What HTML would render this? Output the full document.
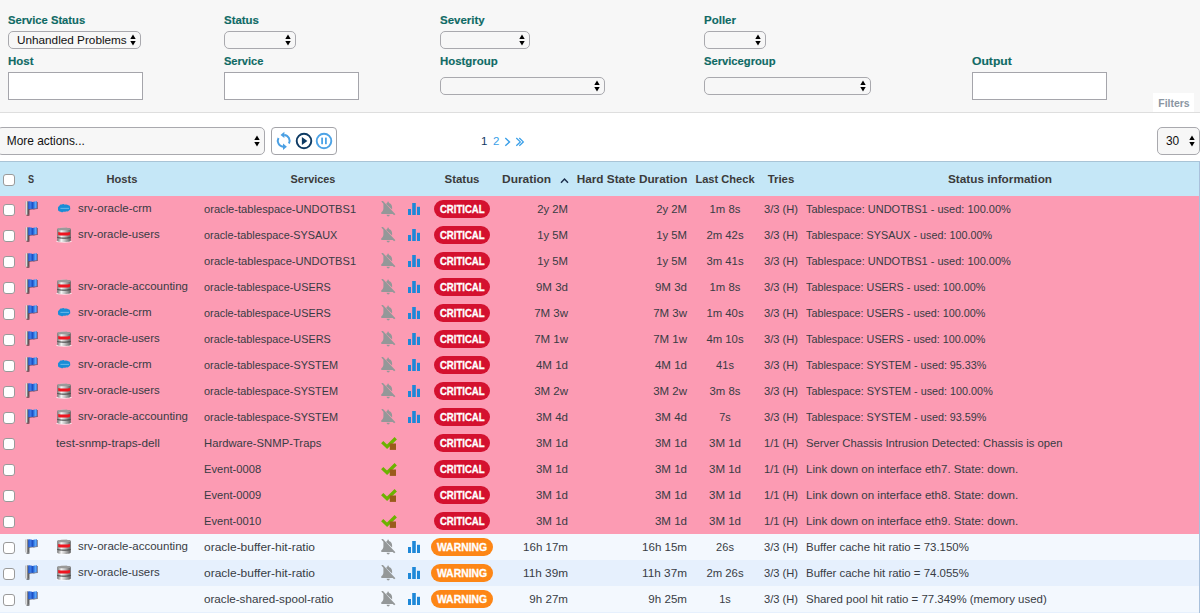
<!DOCTYPE html><html><head><meta charset="utf-8"><style>
html,body{margin:0;padding:0;background:#fff;}
body{width:1200px;height:613px;position:relative;overflow:hidden;font-family:"Liberation Sans", sans-serif;}
.t{position:absolute;white-space:nowrap;}
.sel{position:absolute;box-sizing:border-box;border:1px solid #a9a9ae;border-radius:5px;background:#f7f7f7;}
.st{position:absolute;top:0;white-space:nowrap;}
.arr{position:absolute;width:6px;height:12px;}
.up{position:absolute;left:0;top:0;width:0;height:0;border-left:2.7px solid transparent;border-right:2.7px solid transparent;border-bottom:4.4px solid #000;}
.dn{position:absolute;left:0;top:6.2px;width:0;height:0;border-left:2.7px solid transparent;border-right:2.7px solid transparent;border-top:4.4px solid #000;}
.inp{position:absolute;box-sizing:border-box;border:1px solid #a5a5ab;background:#fff;}
.cb{position:absolute;box-sizing:border-box;width:12px;height:12px;border:1px solid #9a9a9a;border-radius:3px;background:#fff;}
.ic{position:absolute;}
.badge{position:absolute;height:18px;border-radius:9px;color:#fff;font-weight:700;font-size:10.4px;line-height:18px;text-align:center;letter-spacing:0;-webkit-text-stroke:0.3px #fff;}
</style></head><body>
<svg width="0" height="0" style="position:absolute"><defs><linearGradient id="pg" x1="0" x2="1" y1="0" y2="0"><stop offset="0" stop-color="#a0a0a0"/><stop offset="0.28" stop-color="#f4f4f4"/><stop offset="0.55" stop-color="#a9a9a9"/><stop offset="1" stop-color="#3c3c3c"/></linearGradient><linearGradient id="fg" x1="0" x2="1" y1="0" y2="0"><stop offset="0" stop-color="#2457d0"/><stop offset="0.25" stop-color="#3a7ae8"/><stop offset="0.5" stop-color="#1d4fc2"/><stop offset="0.7" stop-color="#3a86ee"/><stop offset="0.88" stop-color="#66b0fa"/><stop offset="1" stop-color="#2c62c8"/></linearGradient><linearGradient id="dbg" x1="0" x2="1" y1="0" y2="0"><stop offset="0" stop-color="#707070"/><stop offset="0.3" stop-color="#f4f4f4"/><stop offset="0.55" stop-color="#c4c4c4"/><stop offset="0.8" stop-color="#8a8a8a"/><stop offset="1" stop-color="#5a5a5a"/></linearGradient></defs></svg>
<div style="position:absolute;left:0;top:0;width:1200px;height:112px;background:#f7f7f7;border-bottom:1px solid #dedede"></div>
<div class="t" style="left:8px;top:10.12px;font-size:11.2px;line-height:20px;font-weight:700;color:#0f6a65;-webkit-text-stroke:0.15px #0f6a65;">Service Status</div>
<div class="t" style="left:224px;top:10.12px;font-size:11.2px;line-height:20px;font-weight:700;color:#0f6a65;transform:scaleX(1.0219);transform-origin:left;-webkit-text-stroke:0.15px #0f6a65;">Status</div>
<div class="t" style="left:440px;top:10.12px;font-size:11.2px;line-height:20px;font-weight:700;color:#0f6a65;transform:scaleX(1.0266);transform-origin:left;-webkit-text-stroke:0.15px #0f6a65;">Severity</div>
<div class="t" style="left:704px;top:10.12px;font-size:11.2px;line-height:20px;font-weight:700;color:#0f6a65;transform:scaleX(1.0271);transform-origin:left;-webkit-text-stroke:0.15px #0f6a65;">Poller</div>
<div class="t" style="left:8px;top:51.12px;font-size:11.2px;line-height:20px;font-weight:700;color:#0f6a65;transform:scaleX(1.0245);transform-origin:left;-webkit-text-stroke:0.15px #0f6a65;">Host</div>
<div class="t" style="left:224px;top:51.12px;font-size:11.2px;line-height:20px;font-weight:700;color:#0f6a65;transform:scaleX(0.9878);transform-origin:left;-webkit-text-stroke:0.15px #0f6a65;">Service</div>
<div class="t" style="left:440px;top:51.12px;font-size:11.2px;line-height:20px;font-weight:700;color:#0f6a65;transform:scaleX(1.0199);transform-origin:left;-webkit-text-stroke:0.15px #0f6a65;">Hostgroup</div>
<div class="t" style="left:704px;top:51.12px;font-size:11.2px;line-height:20px;font-weight:700;color:#0f6a65;-webkit-text-stroke:0.15px #0f6a65;">Servicegroup</div>
<div class="t" style="left:972px;top:51.12px;font-size:11.2px;line-height:20px;font-weight:700;color:#0f6a65;transform:scaleX(1.0840);transform-origin:left;-webkit-text-stroke:0.15px #0f6a65;">Output</div>
<div class="sel" style="left:8px;top:31px;width:133px;height:18px;"><div class="st" style="left:8.0px;line-height:16px;font-size:11.75px;color:#111">Unhandled Problems</div><svg class="arr" style="right:3.9px;top:2.0px" width="6" height="12" viewBox="0 0 6 12"><path d="M0.3 5.0 L3 0.4 L5.7 5.0 Z M0.3 7.0 L3 11.6 L5.7 7.0 Z" fill="#000"/></svg></div>
<div class="sel" style="left:224px;top:31px;width:72px;height:18px;"><svg class="arr" style="right:3.9px;top:2.0px" width="6" height="12" viewBox="0 0 6 12"><path d="M0.3 5.0 L3 0.4 L5.7 5.0 Z M0.3 7.0 L3 11.6 L5.7 7.0 Z" fill="#000"/></svg></div>
<div class="sel" style="left:440px;top:31px;width:90px;height:18px;"><svg class="arr" style="right:3.9px;top:2.0px" width="6" height="12" viewBox="0 0 6 12"><path d="M0.3 5.0 L3 0.4 L5.7 5.0 Z M0.3 7.0 L3 11.6 L5.7 7.0 Z" fill="#000"/></svg></div>
<div class="sel" style="left:704px;top:31px;width:62px;height:18px;"><svg class="arr" style="right:3.9px;top:2.0px" width="6" height="12" viewBox="0 0 6 12"><path d="M0.3 5.0 L3 0.4 L5.7 5.0 Z M0.3 7.0 L3 11.6 L5.7 7.0 Z" fill="#000"/></svg></div>
<div class="sel" style="left:440px;top:77px;width:165px;height:18px;"><svg class="arr" style="right:3.9px;top:2.0px" width="6" height="12" viewBox="0 0 6 12"><path d="M0.3 5.0 L3 0.4 L5.7 5.0 Z M0.3 7.0 L3 11.6 L5.7 7.0 Z" fill="#000"/></svg></div>
<div class="sel" style="left:704px;top:77px;width:167px;height:18px;"><svg class="arr" style="right:3.9px;top:2.0px" width="6" height="12" viewBox="0 0 6 12"><path d="M0.3 5.0 L3 0.4 L5.7 5.0 Z M0.3 7.0 L3 11.6 L5.7 7.0 Z" fill="#000"/></svg></div>
<div class="inp" style="left:8px;top:72px;width:135px;height:28px;"></div>
<div class="inp" style="left:224px;top:72px;width:135px;height:28px;"></div>
<div class="inp" style="left:972px;top:72px;width:135px;height:28px;"></div>
<div style="position:absolute;left:1153px;top:93px;width:41px;height:19px;background:#fff"></div>
<div class="t" style="left:873.8px;width:600px;text-align:center;top:93.53px;font-size:10px;line-height:20px;font-weight:700;color:#8b96a2;transform:scaleX(1.0448);transform-origin:center;">Filters</div>
<div class="sel" style="left:-3px;top:127px;width:268px;height:28px;"><div class="st" style="left:8.8px;line-height:26px;font-size:11.9px;color:#111">More actions...</div><svg class="arr" style="right:3.9px;top:7.0px" width="6" height="12" viewBox="0 0 6 12"><path d="M0.3 5.0 L3 0.4 L5.7 5.0 Z M0.3 7.0 L3 11.6 L5.7 7.0 Z" fill="#000"/></svg></div>
<div style="position:absolute;left:271px;top:127px;width:64px;height:26px;border:1px solid #a3a3a8;border-radius:4px;background:#fff"></div>
<svg style="position:absolute;left:274px;top:130px" width="20" height="22" viewBox="0 0 20 22">
<path d="M10.2 4.9 A5.9 5.9 0 0 1 14.9 13.6" fill="none" stroke="#4a9fe3" stroke-width="2"/>
<path d="M10.4 1.7 L6.5 4.9 L10.4 8.1 Z" fill="#4a9fe3"/>
<path d="M9.2 16.7 A5.9 5.9 0 0 1 4.5 8.0" fill="none" stroke="#4a9fe3" stroke-width="2"/>
<path d="M9.0 13.5 L12.9 16.7 L9.0 19.9 Z" fill="#4a9fe3"/>
</svg>
<svg style="position:absolute;left:295px;top:132px" width="18" height="18" viewBox="0 0 18 18">
<circle cx="9" cy="9" r="7.3" fill="none" stroke="#0d3a63" stroke-width="1.9"/>
<path d="M6.9 4.9 L12.4 9 L6.9 13.1 Z" fill="#0d3a63"/></svg>
<svg style="position:absolute;left:315px;top:132px" width="18" height="18" viewBox="0 0 18 18">
<circle cx="9" cy="9" r="7.3" fill="none" stroke="#4da3e6" stroke-width="1.9"/>
<rect x="6.2" y="5.6" width="1.8" height="6.6" fill="#4da3e6"/><rect x="10" y="5.6" width="1.8" height="6.6" fill="#4da3e6"/></svg>
<div class="t" style="left:481px;top:131.12px;font-size:11.2px;line-height:20px;font-weight:400;color:#0d3a63;transform:scaleX(1.0276);transform-origin:left;">1</div>
<div class="t" style="left:492.5px;top:131.12px;font-size:11.2px;line-height:20px;font-weight:400;color:#3a9fe8;transform:scaleX(1.0276);transform-origin:left;">2</div>
<svg style="position:absolute;left:504px;top:137px" width="22" height="10" viewBox="0 0 22 10">
<path d="M1.3 1 L5.5 4.9 L1.3 8.8" fill="none" stroke="#3a9fe8" stroke-width="1.4"/>
<path d="M12.3 1 L16.3 4.9 L12.3 8.8 M15.3 1 L19.3 4.9 L15.3 8.8" fill="none" stroke="#3a9fe8" stroke-width="1.3"/></svg>
<div class="sel" style="left:1157px;top:127px;width:43px;height:28px;"><div class="st" style="left:8.0px;line-height:26px;font-size:11.9px;color:#111">30</div><svg class="arr" style="right:3.9px;top:7.0px" width="6" height="12" viewBox="0 0 6 12"><path d="M0.3 5.0 L3 0.4 L5.7 5.0 Z M0.3 7.0 L3 11.6 L5.7 7.0 Z" fill="#000"/></svg></div>
<div style="position:absolute;left:0;top:161px;width:1200px;height:35px;background:#c5e7f7;border-top:1px solid #a9c4d6;box-sizing:border-box"></div>
<div class="cb" style="left:3px;top:174px"></div>
<div class="t" style="left:-269px;width:600px;text-align:center;top:169.38px;font-size:11.6px;line-height:20px;font-weight:700;color:#3b3b3b;transform:scaleX(0.7838);transform-origin:center;">S</div>
<div class="t" style="left:-178px;width:600px;text-align:center;top:169.38px;font-size:11.6px;line-height:20px;font-weight:700;color:#3b3b3b;transform:scaleX(0.9602);transform-origin:center;">Hosts</div>
<div class="t" style="left:13.399999999999977px;width:600px;text-align:center;top:169.38px;font-size:11.6px;line-height:20px;font-weight:700;color:#3b3b3b;transform:scaleX(0.9388);transform-origin:center;">Services</div>
<div class="t" style="left:161.75px;width:600px;text-align:center;top:169.38px;font-size:11.6px;line-height:20px;font-weight:700;color:#3b3b3b;transform:scaleX(0.9863);transform-origin:center;">Status</div>
<div class="t" style="left:331.5px;width:600px;text-align:center;top:169.38px;font-size:11.6px;line-height:20px;font-weight:700;color:#3b3b3b;transform:scaleX(1.0165);transform-origin:center;">Hard State Duration</div>
<div class="t" style="left:425.1px;width:600px;text-align:center;top:169.38px;font-size:11.6px;line-height:20px;font-weight:700;color:#3b3b3b;transform:scaleX(0.9568);transform-origin:center;">Last Check</div>
<div class="t" style="left:480.6px;width:600px;text-align:center;top:169.38px;font-size:11.6px;line-height:20px;font-weight:700;color:#3b3b3b;transform:scaleX(0.9862);transform-origin:center;">Tries</div>
<div class="t" style="left:700px;width:600px;text-align:center;top:169.38px;font-size:11.6px;line-height:20px;font-weight:700;color:#3b3b3b;transform:scaleX(1.0162);transform-origin:center;">Status information</div>
<div class="t" style="left:501.5px;top:169.38px;font-size:11.6px;line-height:20px;font-weight:700;color:#3b3b3b;transform:scaleX(1.0318);transform-origin:left;">Duration</div>
<svg style="position:absolute;left:560px;top:177px" width="9" height="7" viewBox="0 0 9 7"><path d="M1 5.8 L4.5 2 L8 5.8" fill="none" stroke="#1d2f4d" stroke-width="1.5"/></svg>
<div style="position:absolute;left:0;top:196px;width:1200px;height:26px;background:#fc9bb3"></div>
<div class="cb" style="left:3px;top:204px"></div>
<svg class="ic" style="left:25px;top:201px" width="15" height="16" viewBox="0 0 15 16">
<rect x="1.3" y="1.2" width="3.3" height="13.8" rx="0.9" fill="#222" opacity="0.55"/>
<path d="M4.1 1.2 C5.9 0.9 7.4 1.4 8.7 1.8 C10.1 1.1 11.4 0.9 12.9 1.0 L12.9 8.0 C11.4 7.9 10.1 8.1 8.7 8.8 C7.4 8.4 5.9 8.7 4.1 9.1 Z" fill="#25253a" opacity="0.55"/>
<rect x="0.4" y="0.3" width="3" height="13.4" rx="0.8" fill="url(#pg)"/>
<path d="M3.2 0.4 C5 0.1 6.5 0.6 7.8 1.0 C9.2 0.3 10.5 0.1 12 0.2 L12 7.2 C10.5 7.1 9.2 7.3 7.8 8.0 C6.5 7.6 5 7.9 3.2 8.3 Z" fill="url(#fg)"/>
</svg>
<svg class="ic" style="left:57px;top:203.2px" width="14" height="10" viewBox="0 0 14 10">
<path d="M2.6 8.4 C1.2 8.4 0.7 7.2 1.1 6.1 C0.7 4.9 1.2 3.5 2.3 3.1 C2.6 1.7 3.8 1.1 4.8 1.6 C5.6 0.9 7 0.9 7.8 1.7 C8.8 1.3 10.4 1.4 11.4 2.2 C12.8 2.4 13.4 3.6 13.1 4.8 C13.6 6 13 7.2 12 7.4 C11.4 8.4 10.2 8.6 9.2 8.2 C8.6 8.8 7.6 9 6.8 8.6 C6.2 9.6 4.6 9.6 4.0 8.7 C3.6 8.7 3 8.6 2.6 8.4 Z" fill="#1a8dd6"/>
<rect x="3.4" y="4.9" width="8.6" height="0.8" fill="#7fc2ee"/>
</svg>
<div class="t" style="left:78px;top:198.19px;font-size:11px;line-height:20px;font-weight:400;color:#383c44;transform:scaleX(1.0489);transform-origin:left;">srv-oracle-crm</div>
<div class="t" style="left:204px;top:199.19px;font-size:11px;line-height:20px;font-weight:400;color:#383c44;transform:scaleX(1.0114);transform-origin:left;">oracle-tablespace-UNDOTBS1</div>
<svg class="ic" style="left:381px;top:201px" width="15" height="16" viewBox="0 0 15 16">
<path d="M0.3 0.6 L1.6 -0.4 L14.4 13.2 L13.1 14.3 L11.79 12.9 L0.3 12.9 L0.3 11.3 C1.8 10.2 2.4 9 2.4 7.2 L2.4 2.85 Z" fill="#949899"/>
<path d="M5.0 2.9 C5.4 2.4 5.9 2.1 6.3 2.0 L6.3 1.4 C6.3 0.8 6.7 0.5 7.1 0.5 C7.5 0.5 7.9 0.8 7.9 1.4 L7.9 2.0 C9.8 2.5 11.1 4.0 11.1 6.2 L11.1 8.6 Z" fill="#949899"/>
<path d="M5.6 13.8 L8.8 13.8 C8.6 14.8 8 15.4 7.2 15.4 C6.4 15.4 5.8 14.8 5.6 13.8 Z" fill="#949899"/>
</svg>
<svg class="ic" style="left:407px;top:203px" width="14" height="13" viewBox="0 0 14 13">
<rect x="1" y="6" width="3" height="6" fill="#1e88d8"/><rect x="5.2" y="0" width="3.6" height="12" fill="#1e88d8"/><rect x="10" y="3.8" width="3" height="8.2" fill="#1e88d8"/>
</svg>
<div class="badge" style="left:434px;top:200px;width:56px;background:#d4112f"><span style="display:inline-block;transform:translateY(1.0px) scaleX(0.92)">CRITICAL</span></div>
<div class="t" style="left:168px;width:400px;text-align:right;top:199.19px;font-size:11px;line-height:20px;font-weight:400;color:#383c44;transform:scaleX(1.0292);transform-origin:right;">2y 2M</div>
<div class="t" style="left:286.5px;width:400px;text-align:right;top:199.19px;font-size:11px;line-height:20px;font-weight:400;color:#383c44;transform:scaleX(1.0292);transform-origin:right;">2y 2M</div>
<div class="t" style="left:425px;width:600px;text-align:center;top:199.19px;font-size:11px;line-height:20px;font-weight:400;color:#383c44;transform:scaleX(1.0302);transform-origin:center;">1m 8s</div>
<div class="t" style="left:480.6px;width:600px;text-align:center;top:199.19px;font-size:11px;line-height:20px;font-weight:400;color:#383c44;transform:scaleX(1.0135);transform-origin:center;">3/3 (H)</div>
<div class="t" style="left:806px;top:199.19px;font-size:11px;line-height:20px;font-weight:400;color:#383c44;">Tablespace: UNDOTBS1 - used: 100.00%</div>
<div style="position:absolute;left:0;top:222px;width:1200px;height:26px;background:#fc9bb3"></div>
<div class="cb" style="left:3px;top:230px"></div>
<svg class="ic" style="left:25px;top:227px" width="15" height="16" viewBox="0 0 15 16">
<rect x="1.3" y="1.2" width="3.3" height="13.8" rx="0.9" fill="#222" opacity="0.55"/>
<path d="M4.1 1.2 C5.9 0.9 7.4 1.4 8.7 1.8 C10.1 1.1 11.4 0.9 12.9 1.0 L12.9 8.0 C11.4 7.9 10.1 8.1 8.7 8.8 C7.4 8.4 5.9 8.7 4.1 9.1 Z" fill="#25253a" opacity="0.55"/>
<rect x="0.4" y="0.3" width="3" height="13.4" rx="0.8" fill="url(#pg)"/>
<path d="M3.2 0.4 C5 0.1 6.5 0.6 7.8 1.0 C9.2 0.3 10.5 0.1 12 0.2 L12 7.2 C10.5 7.1 9.2 7.3 7.8 8.0 C6.5 7.6 5 7.9 3.2 8.3 Z" fill="url(#fg)"/>
</svg>
<svg class="ic" style="left:56px;top:226.6px" width="16" height="17" viewBox="0 0 16 17">
<ellipse cx="8" cy="14.4" rx="7.9" ry="1.3" fill="#ffffff" opacity="0.75"/>
<path d="M1.2 2.2 C1.2 0.2 14.8 0.2 14.8 2.2 L14.8 13.6 C14.8 15.6 1.2 15.6 1.2 13.6 Z" fill="url(#dbg)"/>
<path d="M1.2 2.2 C1.2 0.2 14.8 0.2 14.8 2.2 C14.8 3.6 1.2 3.6 1.2 2.2 Z" fill="#9a9a9a"/>
<path d="M2.2 5.0 C4 5.8 12 5.8 13.8 5.0 L14.2 6.5 L13.8 8.0 C12 8.8 4 8.8 2.2 8.0 Z" fill="#ee1520"/>
<path d="M1.4 10.4 C3 11.4 13 11.4 14.6 10.4" fill="none" stroke="#3a3a3a" stroke-width="1"/>
</svg>
<div class="t" style="left:78px;top:224.19px;font-size:11px;line-height:20px;font-weight:400;color:#383c44;transform:scaleX(1.0357);transform-origin:left;">srv-oracle-users</div>
<div class="t" style="left:204px;top:225.19px;font-size:11px;line-height:20px;font-weight:400;color:#383c44;transform:scaleX(0.9867);transform-origin:left;">oracle-tablespace-SYSAUX</div>
<svg class="ic" style="left:381px;top:227px" width="15" height="16" viewBox="0 0 15 16">
<path d="M0.3 0.6 L1.6 -0.4 L14.4 13.2 L13.1 14.3 L11.79 12.9 L0.3 12.9 L0.3 11.3 C1.8 10.2 2.4 9 2.4 7.2 L2.4 2.85 Z" fill="#949899"/>
<path d="M5.0 2.9 C5.4 2.4 5.9 2.1 6.3 2.0 L6.3 1.4 C6.3 0.8 6.7 0.5 7.1 0.5 C7.5 0.5 7.9 0.8 7.9 1.4 L7.9 2.0 C9.8 2.5 11.1 4.0 11.1 6.2 L11.1 8.6 Z" fill="#949899"/>
<path d="M5.6 13.8 L8.8 13.8 C8.6 14.8 8 15.4 7.2 15.4 C6.4 15.4 5.8 14.8 5.6 13.8 Z" fill="#949899"/>
</svg>
<svg class="ic" style="left:407px;top:229px" width="14" height="13" viewBox="0 0 14 13">
<rect x="1" y="6" width="3" height="6" fill="#1e88d8"/><rect x="5.2" y="0" width="3.6" height="12" fill="#1e88d8"/><rect x="10" y="3.8" width="3" height="8.2" fill="#1e88d8"/>
</svg>
<div class="badge" style="left:434px;top:226px;width:56px;background:#d4112f"><span style="display:inline-block;transform:translateY(1.0px) scaleX(0.92)">CRITICAL</span></div>
<div class="t" style="left:168px;width:400px;text-align:right;top:225.19px;font-size:11px;line-height:20px;font-weight:400;color:#383c44;transform:scaleX(1.0292);transform-origin:right;">1y 5M</div>
<div class="t" style="left:286.5px;width:400px;text-align:right;top:225.19px;font-size:11px;line-height:20px;font-weight:400;color:#383c44;transform:scaleX(1.0292);transform-origin:right;">1y 5M</div>
<div class="t" style="left:425px;width:600px;text-align:center;top:225.19px;font-size:11px;line-height:20px;font-weight:400;color:#383c44;transform:scaleX(1.0299);transform-origin:center;">2m 42s</div>
<div class="t" style="left:480.6px;width:600px;text-align:center;top:225.19px;font-size:11px;line-height:20px;font-weight:400;color:#383c44;transform:scaleX(1.0135);transform-origin:center;">3/3 (H)</div>
<div class="t" style="left:806px;top:225.19px;font-size:11px;line-height:20px;font-weight:400;color:#383c44;transform:scaleX(0.9813);transform-origin:left;">Tablespace: SYSAUX - used: 100.00%</div>
<div style="position:absolute;left:0;top:248px;width:1200px;height:26px;background:#fc9bb3"></div>
<div class="cb" style="left:3px;top:256px"></div>
<svg class="ic" style="left:25px;top:253px" width="15" height="16" viewBox="0 0 15 16">
<rect x="1.3" y="1.2" width="3.3" height="13.8" rx="0.9" fill="#222" opacity="0.55"/>
<path d="M4.1 1.2 C5.9 0.9 7.4 1.4 8.7 1.8 C10.1 1.1 11.4 0.9 12.9 1.0 L12.9 8.0 C11.4 7.9 10.1 8.1 8.7 8.8 C7.4 8.4 5.9 8.7 4.1 9.1 Z" fill="#25253a" opacity="0.55"/>
<rect x="0.4" y="0.3" width="3" height="13.4" rx="0.8" fill="url(#pg)"/>
<path d="M3.2 0.4 C5 0.1 6.5 0.6 7.8 1.0 C9.2 0.3 10.5 0.1 12 0.2 L12 7.2 C10.5 7.1 9.2 7.3 7.8 8.0 C6.5 7.6 5 7.9 3.2 8.3 Z" fill="url(#fg)"/>
</svg>
<div class="t" style="left:204px;top:251.19px;font-size:11px;line-height:20px;font-weight:400;color:#383c44;transform:scaleX(1.0114);transform-origin:left;">oracle-tablespace-UNDOTBS1</div>
<svg class="ic" style="left:381px;top:253px" width="15" height="16" viewBox="0 0 15 16">
<path d="M0.3 0.6 L1.6 -0.4 L14.4 13.2 L13.1 14.3 L11.79 12.9 L0.3 12.9 L0.3 11.3 C1.8 10.2 2.4 9 2.4 7.2 L2.4 2.85 Z" fill="#949899"/>
<path d="M5.0 2.9 C5.4 2.4 5.9 2.1 6.3 2.0 L6.3 1.4 C6.3 0.8 6.7 0.5 7.1 0.5 C7.5 0.5 7.9 0.8 7.9 1.4 L7.9 2.0 C9.8 2.5 11.1 4.0 11.1 6.2 L11.1 8.6 Z" fill="#949899"/>
<path d="M5.6 13.8 L8.8 13.8 C8.6 14.8 8 15.4 7.2 15.4 C6.4 15.4 5.8 14.8 5.6 13.8 Z" fill="#949899"/>
</svg>
<svg class="ic" style="left:407px;top:255px" width="14" height="13" viewBox="0 0 14 13">
<rect x="1" y="6" width="3" height="6" fill="#1e88d8"/><rect x="5.2" y="0" width="3.6" height="12" fill="#1e88d8"/><rect x="10" y="3.8" width="3" height="8.2" fill="#1e88d8"/>
</svg>
<div class="badge" style="left:434px;top:252px;width:56px;background:#d4112f"><span style="display:inline-block;transform:translateY(1.0px) scaleX(0.92)">CRITICAL</span></div>
<div class="t" style="left:168px;width:400px;text-align:right;top:251.19px;font-size:11px;line-height:20px;font-weight:400;color:#383c44;transform:scaleX(1.0292);transform-origin:right;">1y 5M</div>
<div class="t" style="left:286.5px;width:400px;text-align:right;top:251.19px;font-size:11px;line-height:20px;font-weight:400;color:#383c44;transform:scaleX(1.0292);transform-origin:right;">1y 5M</div>
<div class="t" style="left:425px;width:600px;text-align:center;top:251.19px;font-size:11px;line-height:20px;font-weight:400;color:#383c44;transform:scaleX(1.0299);transform-origin:center;">3m 41s</div>
<div class="t" style="left:480.6px;width:600px;text-align:center;top:251.19px;font-size:11px;line-height:20px;font-weight:400;color:#383c44;transform:scaleX(1.0135);transform-origin:center;">3/3 (H)</div>
<div class="t" style="left:806px;top:251.19px;font-size:11px;line-height:20px;font-weight:400;color:#383c44;">Tablespace: UNDOTBS1 - used: 100.00%</div>
<div style="position:absolute;left:0;top:274px;width:1200px;height:26px;background:#fc9bb3"></div>
<div class="cb" style="left:3px;top:282px"></div>
<svg class="ic" style="left:25px;top:279px" width="15" height="16" viewBox="0 0 15 16">
<rect x="1.3" y="1.2" width="3.3" height="13.8" rx="0.9" fill="#222" opacity="0.55"/>
<path d="M4.1 1.2 C5.9 0.9 7.4 1.4 8.7 1.8 C10.1 1.1 11.4 0.9 12.9 1.0 L12.9 8.0 C11.4 7.9 10.1 8.1 8.7 8.8 C7.4 8.4 5.9 8.7 4.1 9.1 Z" fill="#25253a" opacity="0.55"/>
<rect x="0.4" y="0.3" width="3" height="13.4" rx="0.8" fill="url(#pg)"/>
<path d="M3.2 0.4 C5 0.1 6.5 0.6 7.8 1.0 C9.2 0.3 10.5 0.1 12 0.2 L12 7.2 C10.5 7.1 9.2 7.3 7.8 8.0 C6.5 7.6 5 7.9 3.2 8.3 Z" fill="url(#fg)"/>
</svg>
<svg class="ic" style="left:56px;top:278.6px" width="16" height="17" viewBox="0 0 16 17">
<ellipse cx="8" cy="14.4" rx="7.9" ry="1.3" fill="#ffffff" opacity="0.75"/>
<path d="M1.2 2.2 C1.2 0.2 14.8 0.2 14.8 2.2 L14.8 13.6 C14.8 15.6 1.2 15.6 1.2 13.6 Z" fill="url(#dbg)"/>
<path d="M1.2 2.2 C1.2 0.2 14.8 0.2 14.8 2.2 C14.8 3.6 1.2 3.6 1.2 2.2 Z" fill="#9a9a9a"/>
<path d="M2.2 5.0 C4 5.8 12 5.8 13.8 5.0 L14.2 6.5 L13.8 8.0 C12 8.8 4 8.8 2.2 8.0 Z" fill="#ee1520"/>
<path d="M1.4 10.4 C3 11.4 13 11.4 14.6 10.4" fill="none" stroke="#3a3a3a" stroke-width="1"/>
</svg>
<div class="t" style="left:78px;top:276.19px;font-size:11px;line-height:20px;font-weight:400;color:#383c44;transform:scaleX(1.0455);transform-origin:left;">srv-oracle-accounting</div>
<div class="t" style="left:204px;top:277.19px;font-size:11px;line-height:20px;font-weight:400;color:#383c44;transform:scaleX(0.9873);transform-origin:left;">oracle-tablespace-USERS</div>
<svg class="ic" style="left:381px;top:279px" width="15" height="16" viewBox="0 0 15 16">
<path d="M0.3 0.6 L1.6 -0.4 L14.4 13.2 L13.1 14.3 L11.79 12.9 L0.3 12.9 L0.3 11.3 C1.8 10.2 2.4 9 2.4 7.2 L2.4 2.85 Z" fill="#949899"/>
<path d="M5.0 2.9 C5.4 2.4 5.9 2.1 6.3 2.0 L6.3 1.4 C6.3 0.8 6.7 0.5 7.1 0.5 C7.5 0.5 7.9 0.8 7.9 1.4 L7.9 2.0 C9.8 2.5 11.1 4.0 11.1 6.2 L11.1 8.6 Z" fill="#949899"/>
<path d="M5.6 13.8 L8.8 13.8 C8.6 14.8 8 15.4 7.2 15.4 C6.4 15.4 5.8 14.8 5.6 13.8 Z" fill="#949899"/>
</svg>
<svg class="ic" style="left:407px;top:281px" width="14" height="13" viewBox="0 0 14 13">
<rect x="1" y="6" width="3" height="6" fill="#1e88d8"/><rect x="5.2" y="0" width="3.6" height="12" fill="#1e88d8"/><rect x="10" y="3.8" width="3" height="8.2" fill="#1e88d8"/>
</svg>
<div class="badge" style="left:434px;top:278px;width:56px;background:#d4112f"><span style="display:inline-block;transform:translateY(1.0px) scaleX(0.92)">CRITICAL</span></div>
<div class="t" style="left:168px;width:400px;text-align:right;top:277.19px;font-size:11px;line-height:20px;font-weight:400;color:#383c44;transform:scaleX(1.0485);transform-origin:right;">9M 3d</div>
<div class="t" style="left:286.5px;width:400px;text-align:right;top:277.19px;font-size:11px;line-height:20px;font-weight:400;color:#383c44;transform:scaleX(1.0485);transform-origin:right;">9M 3d</div>
<div class="t" style="left:425px;width:600px;text-align:center;top:277.19px;font-size:11px;line-height:20px;font-weight:400;color:#383c44;transform:scaleX(1.0302);transform-origin:center;">1m 8s</div>
<div class="t" style="left:480.6px;width:600px;text-align:center;top:277.19px;font-size:11px;line-height:20px;font-weight:400;color:#383c44;transform:scaleX(1.0135);transform-origin:center;">3/3 (H)</div>
<div class="t" style="left:806px;top:277.19px;font-size:11px;line-height:20px;font-weight:400;color:#383c44;transform:scaleX(0.9815);transform-origin:left;">Tablespace: USERS - used: 100.00%</div>
<div style="position:absolute;left:0;top:300px;width:1200px;height:26px;background:#fc9bb3"></div>
<div class="cb" style="left:3px;top:308px"></div>
<svg class="ic" style="left:25px;top:305px" width="15" height="16" viewBox="0 0 15 16">
<rect x="1.3" y="1.2" width="3.3" height="13.8" rx="0.9" fill="#222" opacity="0.55"/>
<path d="M4.1 1.2 C5.9 0.9 7.4 1.4 8.7 1.8 C10.1 1.1 11.4 0.9 12.9 1.0 L12.9 8.0 C11.4 7.9 10.1 8.1 8.7 8.8 C7.4 8.4 5.9 8.7 4.1 9.1 Z" fill="#25253a" opacity="0.55"/>
<rect x="0.4" y="0.3" width="3" height="13.4" rx="0.8" fill="url(#pg)"/>
<path d="M3.2 0.4 C5 0.1 6.5 0.6 7.8 1.0 C9.2 0.3 10.5 0.1 12 0.2 L12 7.2 C10.5 7.1 9.2 7.3 7.8 8.0 C6.5 7.6 5 7.9 3.2 8.3 Z" fill="url(#fg)"/>
</svg>
<svg class="ic" style="left:57px;top:307.2px" width="14" height="10" viewBox="0 0 14 10">
<path d="M2.6 8.4 C1.2 8.4 0.7 7.2 1.1 6.1 C0.7 4.9 1.2 3.5 2.3 3.1 C2.6 1.7 3.8 1.1 4.8 1.6 C5.6 0.9 7 0.9 7.8 1.7 C8.8 1.3 10.4 1.4 11.4 2.2 C12.8 2.4 13.4 3.6 13.1 4.8 C13.6 6 13 7.2 12 7.4 C11.4 8.4 10.2 8.6 9.2 8.2 C8.6 8.8 7.6 9 6.8 8.6 C6.2 9.6 4.6 9.6 4.0 8.7 C3.6 8.7 3 8.6 2.6 8.4 Z" fill="#1a8dd6"/>
<rect x="3.4" y="4.9" width="8.6" height="0.8" fill="#7fc2ee"/>
</svg>
<div class="t" style="left:78px;top:302.19px;font-size:11px;line-height:20px;font-weight:400;color:#383c44;transform:scaleX(1.0489);transform-origin:left;">srv-oracle-crm</div>
<div class="t" style="left:204px;top:303.19px;font-size:11px;line-height:20px;font-weight:400;color:#383c44;transform:scaleX(0.9873);transform-origin:left;">oracle-tablespace-USERS</div>
<svg class="ic" style="left:381px;top:305px" width="15" height="16" viewBox="0 0 15 16">
<path d="M0.3 0.6 L1.6 -0.4 L14.4 13.2 L13.1 14.3 L11.79 12.9 L0.3 12.9 L0.3 11.3 C1.8 10.2 2.4 9 2.4 7.2 L2.4 2.85 Z" fill="#949899"/>
<path d="M5.0 2.9 C5.4 2.4 5.9 2.1 6.3 2.0 L6.3 1.4 C6.3 0.8 6.7 0.5 7.1 0.5 C7.5 0.5 7.9 0.8 7.9 1.4 L7.9 2.0 C9.8 2.5 11.1 4.0 11.1 6.2 L11.1 8.6 Z" fill="#949899"/>
<path d="M5.6 13.8 L8.8 13.8 C8.6 14.8 8 15.4 7.2 15.4 C6.4 15.4 5.8 14.8 5.6 13.8 Z" fill="#949899"/>
</svg>
<svg class="ic" style="left:407px;top:307px" width="14" height="13" viewBox="0 0 14 13">
<rect x="1" y="6" width="3" height="6" fill="#1e88d8"/><rect x="5.2" y="0" width="3.6" height="12" fill="#1e88d8"/><rect x="10" y="3.8" width="3" height="8.2" fill="#1e88d8"/>
</svg>
<div class="badge" style="left:434px;top:304px;width:56px;background:#d4112f"><span style="display:inline-block;transform:translateY(1.0px) scaleX(0.92)">CRITICAL</span></div>
<div class="t" style="left:168px;width:400px;text-align:right;top:303.19px;font-size:11px;line-height:20px;font-weight:400;color:#383c44;transform:scaleX(1.0448);transform-origin:right;">7M 3w</div>
<div class="t" style="left:286.5px;width:400px;text-align:right;top:303.19px;font-size:11px;line-height:20px;font-weight:400;color:#383c44;transform:scaleX(1.0448);transform-origin:right;">7M 3w</div>
<div class="t" style="left:425px;width:600px;text-align:center;top:303.19px;font-size:11px;line-height:20px;font-weight:400;color:#383c44;transform:scaleX(1.0299);transform-origin:center;">1m 40s</div>
<div class="t" style="left:480.6px;width:600px;text-align:center;top:303.19px;font-size:11px;line-height:20px;font-weight:400;color:#383c44;transform:scaleX(1.0135);transform-origin:center;">3/3 (H)</div>
<div class="t" style="left:806px;top:303.19px;font-size:11px;line-height:20px;font-weight:400;color:#383c44;transform:scaleX(0.9815);transform-origin:left;">Tablespace: USERS - used: 100.00%</div>
<div style="position:absolute;left:0;top:326px;width:1200px;height:26px;background:#fc9bb3"></div>
<div class="cb" style="left:3px;top:334px"></div>
<svg class="ic" style="left:25px;top:331px" width="15" height="16" viewBox="0 0 15 16">
<rect x="1.3" y="1.2" width="3.3" height="13.8" rx="0.9" fill="#222" opacity="0.55"/>
<path d="M4.1 1.2 C5.9 0.9 7.4 1.4 8.7 1.8 C10.1 1.1 11.4 0.9 12.9 1.0 L12.9 8.0 C11.4 7.9 10.1 8.1 8.7 8.8 C7.4 8.4 5.9 8.7 4.1 9.1 Z" fill="#25253a" opacity="0.55"/>
<rect x="0.4" y="0.3" width="3" height="13.4" rx="0.8" fill="url(#pg)"/>
<path d="M3.2 0.4 C5 0.1 6.5 0.6 7.8 1.0 C9.2 0.3 10.5 0.1 12 0.2 L12 7.2 C10.5 7.1 9.2 7.3 7.8 8.0 C6.5 7.6 5 7.9 3.2 8.3 Z" fill="url(#fg)"/>
</svg>
<svg class="ic" style="left:56px;top:330.6px" width="16" height="17" viewBox="0 0 16 17">
<ellipse cx="8" cy="14.4" rx="7.9" ry="1.3" fill="#ffffff" opacity="0.75"/>
<path d="M1.2 2.2 C1.2 0.2 14.8 0.2 14.8 2.2 L14.8 13.6 C14.8 15.6 1.2 15.6 1.2 13.6 Z" fill="url(#dbg)"/>
<path d="M1.2 2.2 C1.2 0.2 14.8 0.2 14.8 2.2 C14.8 3.6 1.2 3.6 1.2 2.2 Z" fill="#9a9a9a"/>
<path d="M2.2 5.0 C4 5.8 12 5.8 13.8 5.0 L14.2 6.5 L13.8 8.0 C12 8.8 4 8.8 2.2 8.0 Z" fill="#ee1520"/>
<path d="M1.4 10.4 C3 11.4 13 11.4 14.6 10.4" fill="none" stroke="#3a3a3a" stroke-width="1"/>
</svg>
<div class="t" style="left:78px;top:328.19px;font-size:11px;line-height:20px;font-weight:400;color:#383c44;transform:scaleX(1.0357);transform-origin:left;">srv-oracle-users</div>
<div class="t" style="left:204px;top:329.19px;font-size:11px;line-height:20px;font-weight:400;color:#383c44;transform:scaleX(0.9873);transform-origin:left;">oracle-tablespace-USERS</div>
<svg class="ic" style="left:381px;top:331px" width="15" height="16" viewBox="0 0 15 16">
<path d="M0.3 0.6 L1.6 -0.4 L14.4 13.2 L13.1 14.3 L11.79 12.9 L0.3 12.9 L0.3 11.3 C1.8 10.2 2.4 9 2.4 7.2 L2.4 2.85 Z" fill="#949899"/>
<path d="M5.0 2.9 C5.4 2.4 5.9 2.1 6.3 2.0 L6.3 1.4 C6.3 0.8 6.7 0.5 7.1 0.5 C7.5 0.5 7.9 0.8 7.9 1.4 L7.9 2.0 C9.8 2.5 11.1 4.0 11.1 6.2 L11.1 8.6 Z" fill="#949899"/>
<path d="M5.6 13.8 L8.8 13.8 C8.6 14.8 8 15.4 7.2 15.4 C6.4 15.4 5.8 14.8 5.6 13.8 Z" fill="#949899"/>
</svg>
<svg class="ic" style="left:407px;top:333px" width="14" height="13" viewBox="0 0 14 13">
<rect x="1" y="6" width="3" height="6" fill="#1e88d8"/><rect x="5.2" y="0" width="3.6" height="12" fill="#1e88d8"/><rect x="10" y="3.8" width="3" height="8.2" fill="#1e88d8"/>
</svg>
<div class="badge" style="left:434px;top:330px;width:56px;background:#d4112f"><span style="display:inline-block;transform:translateY(1.0px) scaleX(0.92)">CRITICAL</span></div>
<div class="t" style="left:168px;width:400px;text-align:right;top:329.19px;font-size:11px;line-height:20px;font-weight:400;color:#383c44;transform:scaleX(1.0448);transform-origin:right;">7M 1w</div>
<div class="t" style="left:286.5px;width:400px;text-align:right;top:329.19px;font-size:11px;line-height:20px;font-weight:400;color:#383c44;transform:scaleX(1.0448);transform-origin:right;">7M 1w</div>
<div class="t" style="left:425px;width:600px;text-align:center;top:329.19px;font-size:11px;line-height:20px;font-weight:400;color:#383c44;transform:scaleX(1.0299);transform-origin:center;">4m 10s</div>
<div class="t" style="left:480.6px;width:600px;text-align:center;top:329.19px;font-size:11px;line-height:20px;font-weight:400;color:#383c44;transform:scaleX(1.0135);transform-origin:center;">3/3 (H)</div>
<div class="t" style="left:806px;top:329.19px;font-size:11px;line-height:20px;font-weight:400;color:#383c44;transform:scaleX(0.9815);transform-origin:left;">Tablespace: USERS - used: 100.00%</div>
<div style="position:absolute;left:0;top:352px;width:1200px;height:26px;background:#fc9bb3"></div>
<div class="cb" style="left:3px;top:360px"></div>
<svg class="ic" style="left:25px;top:357px" width="15" height="16" viewBox="0 0 15 16">
<rect x="1.3" y="1.2" width="3.3" height="13.8" rx="0.9" fill="#222" opacity="0.55"/>
<path d="M4.1 1.2 C5.9 0.9 7.4 1.4 8.7 1.8 C10.1 1.1 11.4 0.9 12.9 1.0 L12.9 8.0 C11.4 7.9 10.1 8.1 8.7 8.8 C7.4 8.4 5.9 8.7 4.1 9.1 Z" fill="#25253a" opacity="0.55"/>
<rect x="0.4" y="0.3" width="3" height="13.4" rx="0.8" fill="url(#pg)"/>
<path d="M3.2 0.4 C5 0.1 6.5 0.6 7.8 1.0 C9.2 0.3 10.5 0.1 12 0.2 L12 7.2 C10.5 7.1 9.2 7.3 7.8 8.0 C6.5 7.6 5 7.9 3.2 8.3 Z" fill="url(#fg)"/>
</svg>
<svg class="ic" style="left:57px;top:359.2px" width="14" height="10" viewBox="0 0 14 10">
<path d="M2.6 8.4 C1.2 8.4 0.7 7.2 1.1 6.1 C0.7 4.9 1.2 3.5 2.3 3.1 C2.6 1.7 3.8 1.1 4.8 1.6 C5.6 0.9 7 0.9 7.8 1.7 C8.8 1.3 10.4 1.4 11.4 2.2 C12.8 2.4 13.4 3.6 13.1 4.8 C13.6 6 13 7.2 12 7.4 C11.4 8.4 10.2 8.6 9.2 8.2 C8.6 8.8 7.6 9 6.8 8.6 C6.2 9.6 4.6 9.6 4.0 8.7 C3.6 8.7 3 8.6 2.6 8.4 Z" fill="#1a8dd6"/>
<rect x="3.4" y="4.9" width="8.6" height="0.8" fill="#7fc2ee"/>
</svg>
<div class="t" style="left:78px;top:354.19px;font-size:11px;line-height:20px;font-weight:400;color:#383c44;transform:scaleX(1.0489);transform-origin:left;">srv-oracle-crm</div>
<div class="t" style="left:204px;top:355.19px;font-size:11px;line-height:20px;font-weight:400;color:#383c44;transform:scaleX(0.9877);transform-origin:left;">oracle-tablespace-SYSTEM</div>
<svg class="ic" style="left:381px;top:357px" width="15" height="16" viewBox="0 0 15 16">
<path d="M0.3 0.6 L1.6 -0.4 L14.4 13.2 L13.1 14.3 L11.79 12.9 L0.3 12.9 L0.3 11.3 C1.8 10.2 2.4 9 2.4 7.2 L2.4 2.85 Z" fill="#949899"/>
<path d="M5.0 2.9 C5.4 2.4 5.9 2.1 6.3 2.0 L6.3 1.4 C6.3 0.8 6.7 0.5 7.1 0.5 C7.5 0.5 7.9 0.8 7.9 1.4 L7.9 2.0 C9.8 2.5 11.1 4.0 11.1 6.2 L11.1 8.6 Z" fill="#949899"/>
<path d="M5.6 13.8 L8.8 13.8 C8.6 14.8 8 15.4 7.2 15.4 C6.4 15.4 5.8 14.8 5.6 13.8 Z" fill="#949899"/>
</svg>
<svg class="ic" style="left:407px;top:359px" width="14" height="13" viewBox="0 0 14 13">
<rect x="1" y="6" width="3" height="6" fill="#1e88d8"/><rect x="5.2" y="0" width="3.6" height="12" fill="#1e88d8"/><rect x="10" y="3.8" width="3" height="8.2" fill="#1e88d8"/>
</svg>
<div class="badge" style="left:434px;top:356px;width:56px;background:#d4112f"><span style="display:inline-block;transform:translateY(1.0px) scaleX(0.92)">CRITICAL</span></div>
<div class="t" style="left:168px;width:400px;text-align:right;top:355.19px;font-size:11px;line-height:20px;font-weight:400;color:#383c44;transform:scaleX(1.0485);transform-origin:right;">4M 1d</div>
<div class="t" style="left:286.5px;width:400px;text-align:right;top:355.19px;font-size:11px;line-height:20px;font-weight:400;color:#383c44;transform:scaleX(1.0485);transform-origin:right;">4M 1d</div>
<div class="t" style="left:425px;width:600px;text-align:center;top:355.19px;font-size:11px;line-height:20px;font-weight:400;color:#383c44;transform:scaleX(1.0044);transform-origin:center;">41s</div>
<div class="t" style="left:480.6px;width:600px;text-align:center;top:355.19px;font-size:11px;line-height:20px;font-weight:400;color:#383c44;transform:scaleX(1.0135);transform-origin:center;">3/3 (H)</div>
<div class="t" style="left:806px;top:355.19px;font-size:11px;line-height:20px;font-weight:400;color:#383c44;transform:scaleX(0.9805);transform-origin:left;">Tablespace: SYSTEM - used: 95.33%</div>
<div style="position:absolute;left:0;top:378px;width:1200px;height:26px;background:#fc9bb3"></div>
<div class="cb" style="left:3px;top:386px"></div>
<svg class="ic" style="left:25px;top:383px" width="15" height="16" viewBox="0 0 15 16">
<rect x="1.3" y="1.2" width="3.3" height="13.8" rx="0.9" fill="#222" opacity="0.55"/>
<path d="M4.1 1.2 C5.9 0.9 7.4 1.4 8.7 1.8 C10.1 1.1 11.4 0.9 12.9 1.0 L12.9 8.0 C11.4 7.9 10.1 8.1 8.7 8.8 C7.4 8.4 5.9 8.7 4.1 9.1 Z" fill="#25253a" opacity="0.55"/>
<rect x="0.4" y="0.3" width="3" height="13.4" rx="0.8" fill="url(#pg)"/>
<path d="M3.2 0.4 C5 0.1 6.5 0.6 7.8 1.0 C9.2 0.3 10.5 0.1 12 0.2 L12 7.2 C10.5 7.1 9.2 7.3 7.8 8.0 C6.5 7.6 5 7.9 3.2 8.3 Z" fill="url(#fg)"/>
</svg>
<svg class="ic" style="left:56px;top:382.6px" width="16" height="17" viewBox="0 0 16 17">
<ellipse cx="8" cy="14.4" rx="7.9" ry="1.3" fill="#ffffff" opacity="0.75"/>
<path d="M1.2 2.2 C1.2 0.2 14.8 0.2 14.8 2.2 L14.8 13.6 C14.8 15.6 1.2 15.6 1.2 13.6 Z" fill="url(#dbg)"/>
<path d="M1.2 2.2 C1.2 0.2 14.8 0.2 14.8 2.2 C14.8 3.6 1.2 3.6 1.2 2.2 Z" fill="#9a9a9a"/>
<path d="M2.2 5.0 C4 5.8 12 5.8 13.8 5.0 L14.2 6.5 L13.8 8.0 C12 8.8 4 8.8 2.2 8.0 Z" fill="#ee1520"/>
<path d="M1.4 10.4 C3 11.4 13 11.4 14.6 10.4" fill="none" stroke="#3a3a3a" stroke-width="1"/>
</svg>
<div class="t" style="left:78px;top:380.19px;font-size:11px;line-height:20px;font-weight:400;color:#383c44;transform:scaleX(1.0357);transform-origin:left;">srv-oracle-users</div>
<div class="t" style="left:204px;top:381.19px;font-size:11px;line-height:20px;font-weight:400;color:#383c44;transform:scaleX(0.9877);transform-origin:left;">oracle-tablespace-SYSTEM</div>
<svg class="ic" style="left:381px;top:383px" width="15" height="16" viewBox="0 0 15 16">
<path d="M0.3 0.6 L1.6 -0.4 L14.4 13.2 L13.1 14.3 L11.79 12.9 L0.3 12.9 L0.3 11.3 C1.8 10.2 2.4 9 2.4 7.2 L2.4 2.85 Z" fill="#949899"/>
<path d="M5.0 2.9 C5.4 2.4 5.9 2.1 6.3 2.0 L6.3 1.4 C6.3 0.8 6.7 0.5 7.1 0.5 C7.5 0.5 7.9 0.8 7.9 1.4 L7.9 2.0 C9.8 2.5 11.1 4.0 11.1 6.2 L11.1 8.6 Z" fill="#949899"/>
<path d="M5.6 13.8 L8.8 13.8 C8.6 14.8 8 15.4 7.2 15.4 C6.4 15.4 5.8 14.8 5.6 13.8 Z" fill="#949899"/>
</svg>
<svg class="ic" style="left:407px;top:385px" width="14" height="13" viewBox="0 0 14 13">
<rect x="1" y="6" width="3" height="6" fill="#1e88d8"/><rect x="5.2" y="0" width="3.6" height="12" fill="#1e88d8"/><rect x="10" y="3.8" width="3" height="8.2" fill="#1e88d8"/>
</svg>
<div class="badge" style="left:434px;top:382px;width:56px;background:#d4112f"><span style="display:inline-block;transform:translateY(1.0px) scaleX(0.92)">CRITICAL</span></div>
<div class="t" style="left:168px;width:400px;text-align:right;top:381.19px;font-size:11px;line-height:20px;font-weight:400;color:#383c44;transform:scaleX(1.0448);transform-origin:right;">3M 2w</div>
<div class="t" style="left:286.5px;width:400px;text-align:right;top:381.19px;font-size:11px;line-height:20px;font-weight:400;color:#383c44;transform:scaleX(1.0448);transform-origin:right;">3M 2w</div>
<div class="t" style="left:425px;width:600px;text-align:center;top:381.19px;font-size:11px;line-height:20px;font-weight:400;color:#383c44;transform:scaleX(1.0302);transform-origin:center;">3m 8s</div>
<div class="t" style="left:480.6px;width:600px;text-align:center;top:381.19px;font-size:11px;line-height:20px;font-weight:400;color:#383c44;transform:scaleX(1.0135);transform-origin:center;">3/3 (H)</div>
<div class="t" style="left:806px;top:381.19px;font-size:11px;line-height:20px;font-weight:400;color:#383c44;transform:scaleX(0.9820);transform-origin:left;">Tablespace: SYSTEM - used: 100.00%</div>
<div style="position:absolute;left:0;top:404px;width:1200px;height:26px;background:#fc9bb3"></div>
<div class="cb" style="left:3px;top:412px"></div>
<svg class="ic" style="left:25px;top:409px" width="15" height="16" viewBox="0 0 15 16">
<rect x="1.3" y="1.2" width="3.3" height="13.8" rx="0.9" fill="#222" opacity="0.55"/>
<path d="M4.1 1.2 C5.9 0.9 7.4 1.4 8.7 1.8 C10.1 1.1 11.4 0.9 12.9 1.0 L12.9 8.0 C11.4 7.9 10.1 8.1 8.7 8.8 C7.4 8.4 5.9 8.7 4.1 9.1 Z" fill="#25253a" opacity="0.55"/>
<rect x="0.4" y="0.3" width="3" height="13.4" rx="0.8" fill="url(#pg)"/>
<path d="M3.2 0.4 C5 0.1 6.5 0.6 7.8 1.0 C9.2 0.3 10.5 0.1 12 0.2 L12 7.2 C10.5 7.1 9.2 7.3 7.8 8.0 C6.5 7.6 5 7.9 3.2 8.3 Z" fill="url(#fg)"/>
</svg>
<svg class="ic" style="left:56px;top:408.6px" width="16" height="17" viewBox="0 0 16 17">
<ellipse cx="8" cy="14.4" rx="7.9" ry="1.3" fill="#ffffff" opacity="0.75"/>
<path d="M1.2 2.2 C1.2 0.2 14.8 0.2 14.8 2.2 L14.8 13.6 C14.8 15.6 1.2 15.6 1.2 13.6 Z" fill="url(#dbg)"/>
<path d="M1.2 2.2 C1.2 0.2 14.8 0.2 14.8 2.2 C14.8 3.6 1.2 3.6 1.2 2.2 Z" fill="#9a9a9a"/>
<path d="M2.2 5.0 C4 5.8 12 5.8 13.8 5.0 L14.2 6.5 L13.8 8.0 C12 8.8 4 8.8 2.2 8.0 Z" fill="#ee1520"/>
<path d="M1.4 10.4 C3 11.4 13 11.4 14.6 10.4" fill="none" stroke="#3a3a3a" stroke-width="1"/>
</svg>
<div class="t" style="left:78px;top:406.19px;font-size:11px;line-height:20px;font-weight:400;color:#383c44;transform:scaleX(1.0455);transform-origin:left;">srv-oracle-accounting</div>
<div class="t" style="left:204px;top:407.19px;font-size:11px;line-height:20px;font-weight:400;color:#383c44;transform:scaleX(0.9877);transform-origin:left;">oracle-tablespace-SYSTEM</div>
<svg class="ic" style="left:381px;top:409px" width="15" height="16" viewBox="0 0 15 16">
<path d="M0.3 0.6 L1.6 -0.4 L14.4 13.2 L13.1 14.3 L11.79 12.9 L0.3 12.9 L0.3 11.3 C1.8 10.2 2.4 9 2.4 7.2 L2.4 2.85 Z" fill="#949899"/>
<path d="M5.0 2.9 C5.4 2.4 5.9 2.1 6.3 2.0 L6.3 1.4 C6.3 0.8 6.7 0.5 7.1 0.5 C7.5 0.5 7.9 0.8 7.9 1.4 L7.9 2.0 C9.8 2.5 11.1 4.0 11.1 6.2 L11.1 8.6 Z" fill="#949899"/>
<path d="M5.6 13.8 L8.8 13.8 C8.6 14.8 8 15.4 7.2 15.4 C6.4 15.4 5.8 14.8 5.6 13.8 Z" fill="#949899"/>
</svg>
<svg class="ic" style="left:407px;top:411px" width="14" height="13" viewBox="0 0 14 13">
<rect x="1" y="6" width="3" height="6" fill="#1e88d8"/><rect x="5.2" y="0" width="3.6" height="12" fill="#1e88d8"/><rect x="10" y="3.8" width="3" height="8.2" fill="#1e88d8"/>
</svg>
<div class="badge" style="left:434px;top:408px;width:56px;background:#d4112f"><span style="display:inline-block;transform:translateY(1.0px) scaleX(0.92)">CRITICAL</span></div>
<div class="t" style="left:168px;width:400px;text-align:right;top:407.19px;font-size:11px;line-height:20px;font-weight:400;color:#383c44;transform:scaleX(1.0485);transform-origin:right;">3M 4d</div>
<div class="t" style="left:286.5px;width:400px;text-align:right;top:407.19px;font-size:11px;line-height:20px;font-weight:400;color:#383c44;transform:scaleX(1.0485);transform-origin:right;">3M 4d</div>
<div class="t" style="left:425px;width:600px;text-align:center;top:407.19px;font-size:11px;line-height:20px;font-weight:400;color:#383c44;transform:scaleX(0.9933);transform-origin:center;">7s</div>
<div class="t" style="left:480.6px;width:600px;text-align:center;top:407.19px;font-size:11px;line-height:20px;font-weight:400;color:#383c44;transform:scaleX(1.0135);transform-origin:center;">3/3 (H)</div>
<div class="t" style="left:806px;top:407.19px;font-size:11px;line-height:20px;font-weight:400;color:#383c44;transform:scaleX(0.9805);transform-origin:left;">Tablespace: SYSTEM - used: 93.59%</div>
<div style="position:absolute;left:0;top:430px;width:1200px;height:26px;background:#fc9bb3"></div>
<div class="cb" style="left:3px;top:438px"></div>
<div class="t" style="left:56px;top:433.19px;font-size:11px;line-height:20px;font-weight:400;color:#383c44;transform:scaleX(1.0674);transform-origin:left;">test-snmp-traps-dell</div>
<div class="t" style="left:204px;top:433.19px;font-size:11px;line-height:20px;font-weight:400;color:#383c44;transform:scaleX(1.0244);transform-origin:left;">Hardware-SNMP-Traps</div>
<svg class="ic" style="left:381px;top:436px" width="16" height="15" viewBox="0 0 16 15">
<path d="M0.1 7.25 L2.3 5.0 L6 8.6 L13.6 0.9 L15.9 3.4 L6.1 13.1 Z" fill="#6cb300"/>
<rect x="8.8" y="7.5" width="6.2" height="6.4" fill="#9a5b1b"/>
</svg>
<div class="badge" style="left:434px;top:434px;width:56px;background:#d4112f"><span style="display:inline-block;transform:translateY(1.0px) scaleX(0.92)">CRITICAL</span></div>
<div class="t" style="left:168px;width:400px;text-align:right;top:433.19px;font-size:11px;line-height:20px;font-weight:400;color:#383c44;transform:scaleX(1.0485);transform-origin:right;">3M 1d</div>
<div class="t" style="left:286.5px;width:400px;text-align:right;top:433.19px;font-size:11px;line-height:20px;font-weight:400;color:#383c44;transform:scaleX(1.0485);transform-origin:right;">3M 1d</div>
<div class="t" style="left:425px;width:600px;text-align:center;top:433.19px;font-size:11px;line-height:20px;font-weight:400;color:#383c44;transform:scaleX(1.0485);transform-origin:center;">3M 1d</div>
<div class="t" style="left:480.6px;width:600px;text-align:center;top:433.19px;font-size:11px;line-height:20px;font-weight:400;color:#383c44;transform:scaleX(1.0135);transform-origin:center;">1/1 (H)</div>
<div class="t" style="left:806px;top:433.19px;font-size:11px;line-height:20px;font-weight:400;color:#383c44;transform:scaleX(1.0233);transform-origin:left;">Server Chassis Intrusion Detected: Chassis is open</div>
<div style="position:absolute;left:0;top:456px;width:1200px;height:26px;background:#fc9bb3"></div>
<div class="cb" style="left:3px;top:464px"></div>
<div class="t" style="left:204px;top:459.19px;font-size:11px;line-height:20px;font-weight:400;color:#383c44;transform:scaleX(1.0158);transform-origin:left;">Event-0008</div>
<svg class="ic" style="left:381px;top:462px" width="16" height="15" viewBox="0 0 16 15">
<path d="M0.1 7.25 L2.3 5.0 L6 8.6 L13.6 0.9 L15.9 3.4 L6.1 13.1 Z" fill="#6cb300"/>
<rect x="8.8" y="7.5" width="6.2" height="6.4" fill="#9a5b1b"/>
</svg>
<div class="badge" style="left:434px;top:460px;width:56px;background:#d4112f"><span style="display:inline-block;transform:translateY(1.0px) scaleX(0.92)">CRITICAL</span></div>
<div class="t" style="left:168px;width:400px;text-align:right;top:459.19px;font-size:11px;line-height:20px;font-weight:400;color:#383c44;transform:scaleX(1.0485);transform-origin:right;">3M 1d</div>
<div class="t" style="left:286.5px;width:400px;text-align:right;top:459.19px;font-size:11px;line-height:20px;font-weight:400;color:#383c44;transform:scaleX(1.0485);transform-origin:right;">3M 1d</div>
<div class="t" style="left:425px;width:600px;text-align:center;top:459.19px;font-size:11px;line-height:20px;font-weight:400;color:#383c44;transform:scaleX(1.0485);transform-origin:center;">3M 1d</div>
<div class="t" style="left:480.6px;width:600px;text-align:center;top:459.19px;font-size:11px;line-height:20px;font-weight:400;color:#383c44;transform:scaleX(1.0135);transform-origin:center;">1/1 (H)</div>
<div class="t" style="left:806px;top:459.19px;font-size:11px;line-height:20px;font-weight:400;color:#383c44;transform:scaleX(1.0512);transform-origin:left;">Link down on interface eth7. State: down.</div>
<div style="position:absolute;left:0;top:482px;width:1200px;height:26px;background:#fc9bb3"></div>
<div class="cb" style="left:3px;top:490px"></div>
<div class="t" style="left:204px;top:485.19px;font-size:11px;line-height:20px;font-weight:400;color:#383c44;transform:scaleX(1.0158);transform-origin:left;">Event-0009</div>
<svg class="ic" style="left:381px;top:488px" width="16" height="15" viewBox="0 0 16 15">
<path d="M0.1 7.25 L2.3 5.0 L6 8.6 L13.6 0.9 L15.9 3.4 L6.1 13.1 Z" fill="#6cb300"/>
<rect x="8.8" y="7.5" width="6.2" height="6.4" fill="#9a5b1b"/>
</svg>
<div class="badge" style="left:434px;top:486px;width:56px;background:#d4112f"><span style="display:inline-block;transform:translateY(1.0px) scaleX(0.92)">CRITICAL</span></div>
<div class="t" style="left:168px;width:400px;text-align:right;top:485.19px;font-size:11px;line-height:20px;font-weight:400;color:#383c44;transform:scaleX(1.0485);transform-origin:right;">3M 1d</div>
<div class="t" style="left:286.5px;width:400px;text-align:right;top:485.19px;font-size:11px;line-height:20px;font-weight:400;color:#383c44;transform:scaleX(1.0485);transform-origin:right;">3M 1d</div>
<div class="t" style="left:425px;width:600px;text-align:center;top:485.19px;font-size:11px;line-height:20px;font-weight:400;color:#383c44;transform:scaleX(1.0485);transform-origin:center;">3M 1d</div>
<div class="t" style="left:480.6px;width:600px;text-align:center;top:485.19px;font-size:11px;line-height:20px;font-weight:400;color:#383c44;transform:scaleX(1.0135);transform-origin:center;">1/1 (H)</div>
<div class="t" style="left:806px;top:485.19px;font-size:11px;line-height:20px;font-weight:400;color:#383c44;transform:scaleX(1.0512);transform-origin:left;">Link down on interface eth8. State: down.</div>
<div style="position:absolute;left:0;top:508px;width:1200px;height:26px;background:#fc9bb3"></div>
<div class="cb" style="left:3px;top:516px"></div>
<div class="t" style="left:204px;top:511.19px;font-size:11px;line-height:20px;font-weight:400;color:#383c44;transform:scaleX(1.0158);transform-origin:left;">Event-0010</div>
<svg class="ic" style="left:381px;top:514px" width="16" height="15" viewBox="0 0 16 15">
<path d="M0.1 7.25 L2.3 5.0 L6 8.6 L13.6 0.9 L15.9 3.4 L6.1 13.1 Z" fill="#6cb300"/>
<rect x="8.8" y="7.5" width="6.2" height="6.4" fill="#9a5b1b"/>
</svg>
<div class="badge" style="left:434px;top:512px;width:56px;background:#d4112f"><span style="display:inline-block;transform:translateY(1.0px) scaleX(0.92)">CRITICAL</span></div>
<div class="t" style="left:168px;width:400px;text-align:right;top:511.19px;font-size:11px;line-height:20px;font-weight:400;color:#383c44;transform:scaleX(1.0485);transform-origin:right;">3M 1d</div>
<div class="t" style="left:286.5px;width:400px;text-align:right;top:511.19px;font-size:11px;line-height:20px;font-weight:400;color:#383c44;transform:scaleX(1.0485);transform-origin:right;">3M 1d</div>
<div class="t" style="left:425px;width:600px;text-align:center;top:511.19px;font-size:11px;line-height:20px;font-weight:400;color:#383c44;transform:scaleX(1.0485);transform-origin:center;">3M 1d</div>
<div class="t" style="left:480.6px;width:600px;text-align:center;top:511.19px;font-size:11px;line-height:20px;font-weight:400;color:#383c44;transform:scaleX(1.0135);transform-origin:center;">1/1 (H)</div>
<div class="t" style="left:806px;top:511.19px;font-size:11px;line-height:20px;font-weight:400;color:#383c44;transform:scaleX(1.0512);transform-origin:left;">Link down on interface eth9. State: down.</div>
<div style="position:absolute;left:0;top:534px;width:1200px;height:26px;background:#f3f8fe"></div>
<div class="cb" style="left:3px;top:542px"></div>
<svg class="ic" style="left:25px;top:539px" width="15" height="16" viewBox="0 0 15 16">
<rect x="1.3" y="1.2" width="3.3" height="13.8" rx="0.9" fill="#222" opacity="0.55"/>
<path d="M4.1 1.2 C5.9 0.9 7.4 1.4 8.7 1.8 C10.1 1.1 11.4 0.9 12.9 1.0 L12.9 8.0 C11.4 7.9 10.1 8.1 8.7 8.8 C7.4 8.4 5.9 8.7 4.1 9.1 Z" fill="#25253a" opacity="0.55"/>
<rect x="0.4" y="0.3" width="3" height="13.4" rx="0.8" fill="url(#pg)"/>
<path d="M3.2 0.4 C5 0.1 6.5 0.6 7.8 1.0 C9.2 0.3 10.5 0.1 12 0.2 L12 7.2 C10.5 7.1 9.2 7.3 7.8 8.0 C6.5 7.6 5 7.9 3.2 8.3 Z" fill="url(#fg)"/>
</svg>
<svg class="ic" style="left:56px;top:538.6px" width="16" height="17" viewBox="0 0 16 17">
<ellipse cx="8" cy="14.4" rx="7.9" ry="1.3" fill="#ffffff" opacity="0.75"/>
<path d="M1.2 2.2 C1.2 0.2 14.8 0.2 14.8 2.2 L14.8 13.6 C14.8 15.6 1.2 15.6 1.2 13.6 Z" fill="url(#dbg)"/>
<path d="M1.2 2.2 C1.2 0.2 14.8 0.2 14.8 2.2 C14.8 3.6 1.2 3.6 1.2 2.2 Z" fill="#9a9a9a"/>
<path d="M2.2 5.0 C4 5.8 12 5.8 13.8 5.0 L14.2 6.5 L13.8 8.0 C12 8.8 4 8.8 2.2 8.0 Z" fill="#ee1520"/>
<path d="M1.4 10.4 C3 11.4 13 11.4 14.6 10.4" fill="none" stroke="#3a3a3a" stroke-width="1"/>
</svg>
<div class="t" style="left:78px;top:536.19px;font-size:11px;line-height:20px;font-weight:400;color:#383c44;transform:scaleX(1.0455);transform-origin:left;">srv-oracle-accounting</div>
<div class="t" style="left:204px;top:537.19px;font-size:11px;line-height:20px;font-weight:400;color:#383c44;transform:scaleX(1.0891);transform-origin:left;">oracle-buffer-hit-ratio</div>
<svg class="ic" style="left:381px;top:539px" width="15" height="16" viewBox="0 0 15 16">
<path d="M0.3 0.6 L1.6 -0.4 L14.4 13.2 L13.1 14.3 L11.79 12.9 L0.3 12.9 L0.3 11.3 C1.8 10.2 2.4 9 2.4 7.2 L2.4 2.85 Z" fill="#949899"/>
<path d="M5.0 2.9 C5.4 2.4 5.9 2.1 6.3 2.0 L6.3 1.4 C6.3 0.8 6.7 0.5 7.1 0.5 C7.5 0.5 7.9 0.8 7.9 1.4 L7.9 2.0 C9.8 2.5 11.1 4.0 11.1 6.2 L11.1 8.6 Z" fill="#949899"/>
<path d="M5.6 13.8 L8.8 13.8 C8.6 14.8 8 15.4 7.2 15.4 C6.4 15.4 5.8 14.8 5.6 13.8 Z" fill="#949899"/>
</svg>
<svg class="ic" style="left:407px;top:541px" width="14" height="13" viewBox="0 0 14 13">
<rect x="1" y="6" width="3" height="6" fill="#1e88d8"/><rect x="5.2" y="0" width="3.6" height="12" fill="#1e88d8"/><rect x="10" y="3.8" width="3" height="8.2" fill="#1e88d8"/>
</svg>
<div class="badge" style="left:431px;top:538px;width:62px;background:#fd8616"><span style="display:inline-block;transform:translateY(0.8px)">WARNING</span></div>
<div class="t" style="left:168px;width:400px;text-align:right;top:537.19px;font-size:11px;line-height:20px;font-weight:400;color:#383c44;transform:scaleX(1.0500);transform-origin:right;">16h 17m</div>
<div class="t" style="left:286.5px;width:400px;text-align:right;top:537.19px;font-size:11px;line-height:20px;font-weight:400;color:#383c44;transform:scaleX(1.0500);transform-origin:right;">16h 15m</div>
<div class="t" style="left:425px;width:600px;text-align:center;top:537.19px;font-size:11px;line-height:20px;font-weight:400;color:#383c44;transform:scaleX(1.0044);transform-origin:center;">26s</div>
<div class="t" style="left:480.6px;width:600px;text-align:center;top:537.19px;font-size:11px;line-height:20px;font-weight:400;color:#383c44;transform:scaleX(1.0135);transform-origin:center;">3/3 (H)</div>
<div class="t" style="left:806px;top:537.19px;font-size:11px;line-height:20px;font-weight:400;color:#383c44;transform:scaleX(1.0397);transform-origin:left;">Buffer cache hit ratio = 73.150%</div>
<div style="position:absolute;left:0;top:560px;width:1200px;height:26px;background:#e6f0fd"></div>
<div class="cb" style="left:3px;top:568px"></div>
<svg class="ic" style="left:25px;top:565px" width="15" height="16" viewBox="0 0 15 16">
<rect x="1.3" y="1.2" width="3.3" height="13.8" rx="0.9" fill="#222" opacity="0.55"/>
<path d="M4.1 1.2 C5.9 0.9 7.4 1.4 8.7 1.8 C10.1 1.1 11.4 0.9 12.9 1.0 L12.9 8.0 C11.4 7.9 10.1 8.1 8.7 8.8 C7.4 8.4 5.9 8.7 4.1 9.1 Z" fill="#25253a" opacity="0.55"/>
<rect x="0.4" y="0.3" width="3" height="13.4" rx="0.8" fill="url(#pg)"/>
<path d="M3.2 0.4 C5 0.1 6.5 0.6 7.8 1.0 C9.2 0.3 10.5 0.1 12 0.2 L12 7.2 C10.5 7.1 9.2 7.3 7.8 8.0 C6.5 7.6 5 7.9 3.2 8.3 Z" fill="url(#fg)"/>
</svg>
<svg class="ic" style="left:56px;top:564.6px" width="16" height="17" viewBox="0 0 16 17">
<ellipse cx="8" cy="14.4" rx="7.9" ry="1.3" fill="#ffffff" opacity="0.75"/>
<path d="M1.2 2.2 C1.2 0.2 14.8 0.2 14.8 2.2 L14.8 13.6 C14.8 15.6 1.2 15.6 1.2 13.6 Z" fill="url(#dbg)"/>
<path d="M1.2 2.2 C1.2 0.2 14.8 0.2 14.8 2.2 C14.8 3.6 1.2 3.6 1.2 2.2 Z" fill="#9a9a9a"/>
<path d="M2.2 5.0 C4 5.8 12 5.8 13.8 5.0 L14.2 6.5 L13.8 8.0 C12 8.8 4 8.8 2.2 8.0 Z" fill="#ee1520"/>
<path d="M1.4 10.4 C3 11.4 13 11.4 14.6 10.4" fill="none" stroke="#3a3a3a" stroke-width="1"/>
</svg>
<div class="t" style="left:78px;top:562.19px;font-size:11px;line-height:20px;font-weight:400;color:#383c44;transform:scaleX(1.0357);transform-origin:left;">srv-oracle-users</div>
<div class="t" style="left:204px;top:563.19px;font-size:11px;line-height:20px;font-weight:400;color:#383c44;transform:scaleX(1.0891);transform-origin:left;">oracle-buffer-hit-ratio</div>
<svg class="ic" style="left:381px;top:565px" width="15" height="16" viewBox="0 0 15 16">
<path d="M0.3 0.6 L1.6 -0.4 L14.4 13.2 L13.1 14.3 L11.79 12.9 L0.3 12.9 L0.3 11.3 C1.8 10.2 2.4 9 2.4 7.2 L2.4 2.85 Z" fill="#949899"/>
<path d="M5.0 2.9 C5.4 2.4 5.9 2.1 6.3 2.0 L6.3 1.4 C6.3 0.8 6.7 0.5 7.1 0.5 C7.5 0.5 7.9 0.8 7.9 1.4 L7.9 2.0 C9.8 2.5 11.1 4.0 11.1 6.2 L11.1 8.6 Z" fill="#949899"/>
<path d="M5.6 13.8 L8.8 13.8 C8.6 14.8 8 15.4 7.2 15.4 C6.4 15.4 5.8 14.8 5.6 13.8 Z" fill="#949899"/>
</svg>
<svg class="ic" style="left:407px;top:567px" width="14" height="13" viewBox="0 0 14 13">
<rect x="1" y="6" width="3" height="6" fill="#1e88d8"/><rect x="5.2" y="0" width="3.6" height="12" fill="#1e88d8"/><rect x="10" y="3.8" width="3" height="8.2" fill="#1e88d8"/>
</svg>
<div class="badge" style="left:431px;top:564px;width:62px;background:#fd8616"><span style="display:inline-block;transform:translateY(0.8px)">WARNING</span></div>
<div class="t" style="left:168px;width:400px;text-align:right;top:563.19px;font-size:11px;line-height:20px;font-weight:400;color:#383c44;transform:scaleX(1.0703);transform-origin:right;">11h 39m</div>
<div class="t" style="left:286.5px;width:400px;text-align:right;top:563.19px;font-size:11px;line-height:20px;font-weight:400;color:#383c44;transform:scaleX(1.0703);transform-origin:right;">11h 37m</div>
<div class="t" style="left:425px;width:600px;text-align:center;top:563.19px;font-size:11px;line-height:20px;font-weight:400;color:#383c44;transform:scaleX(1.0299);transform-origin:center;">2m 26s</div>
<div class="t" style="left:480.6px;width:600px;text-align:center;top:563.19px;font-size:11px;line-height:20px;font-weight:400;color:#383c44;transform:scaleX(1.0135);transform-origin:center;">3/3 (H)</div>
<div class="t" style="left:806px;top:563.19px;font-size:11px;line-height:20px;font-weight:400;color:#383c44;transform:scaleX(1.0397);transform-origin:left;">Buffer cache hit ratio = 74.055%</div>
<div style="position:absolute;left:0;top:586px;width:1200px;height:26px;background:#f3f8fe"></div>
<div class="cb" style="left:3px;top:594px"></div>
<svg class="ic" style="left:25px;top:591px" width="15" height="16" viewBox="0 0 15 16">
<rect x="1.3" y="1.2" width="3.3" height="13.8" rx="0.9" fill="#222" opacity="0.55"/>
<path d="M4.1 1.2 C5.9 0.9 7.4 1.4 8.7 1.8 C10.1 1.1 11.4 0.9 12.9 1.0 L12.9 8.0 C11.4 7.9 10.1 8.1 8.7 8.8 C7.4 8.4 5.9 8.7 4.1 9.1 Z" fill="#25253a" opacity="0.55"/>
<rect x="0.4" y="0.3" width="3" height="13.4" rx="0.8" fill="url(#pg)"/>
<path d="M3.2 0.4 C5 0.1 6.5 0.6 7.8 1.0 C9.2 0.3 10.5 0.1 12 0.2 L12 7.2 C10.5 7.1 9.2 7.3 7.8 8.0 C6.5 7.6 5 7.9 3.2 8.3 Z" fill="url(#fg)"/>
</svg>
<div class="t" style="left:204px;top:589.19px;font-size:11px;line-height:20px;font-weight:400;color:#383c44;transform:scaleX(1.0589);transform-origin:left;">oracle-shared-spool-ratio</div>
<svg class="ic" style="left:381px;top:591px" width="15" height="16" viewBox="0 0 15 16">
<path d="M0.3 0.6 L1.6 -0.4 L14.4 13.2 L13.1 14.3 L11.79 12.9 L0.3 12.9 L0.3 11.3 C1.8 10.2 2.4 9 2.4 7.2 L2.4 2.85 Z" fill="#949899"/>
<path d="M5.0 2.9 C5.4 2.4 5.9 2.1 6.3 2.0 L6.3 1.4 C6.3 0.8 6.7 0.5 7.1 0.5 C7.5 0.5 7.9 0.8 7.9 1.4 L7.9 2.0 C9.8 2.5 11.1 4.0 11.1 6.2 L11.1 8.6 Z" fill="#949899"/>
<path d="M5.6 13.8 L8.8 13.8 C8.6 14.8 8 15.4 7.2 15.4 C6.4 15.4 5.8 14.8 5.6 13.8 Z" fill="#949899"/>
</svg>
<svg class="ic" style="left:407px;top:593px" width="14" height="13" viewBox="0 0 14 13">
<rect x="1" y="6" width="3" height="6" fill="#1e88d8"/><rect x="5.2" y="0" width="3.6" height="12" fill="#1e88d8"/><rect x="10" y="3.8" width="3" height="8.2" fill="#1e88d8"/>
</svg>
<div class="badge" style="left:431px;top:590px;width:62px;background:#fd8616"><span style="display:inline-block;transform:translateY(0.8px)">WARNING</span></div>
<div class="t" style="left:168px;width:400px;text-align:right;top:589.19px;font-size:11px;line-height:20px;font-weight:400;color:#383c44;transform:scaleX(1.0532);transform-origin:right;">9h 27m</div>
<div class="t" style="left:286.5px;width:400px;text-align:right;top:589.19px;font-size:11px;line-height:20px;font-weight:400;color:#383c44;transform:scaleX(1.0532);transform-origin:right;">9h 25m</div>
<div class="t" style="left:425px;width:600px;text-align:center;top:589.19px;font-size:11px;line-height:20px;font-weight:400;color:#383c44;transform:scaleX(0.9933);transform-origin:center;">1s</div>
<div class="t" style="left:480.6px;width:600px;text-align:center;top:589.19px;font-size:11px;line-height:20px;font-weight:400;color:#383c44;transform:scaleX(1.0135);transform-origin:center;">3/3 (H)</div>
<div class="t" style="left:806px;top:589.19px;font-size:11px;line-height:20px;font-weight:400;color:#383c44;transform:scaleX(1.0400);transform-origin:left;">Shared pool hit ratio = 77.349% (memory used)</div>
<div style="position:absolute;left:0;top:612px;width:1200px;height:1px;background:#e6f0fd"></div>
<div style="position:absolute;left:1199px;top:161px;width:1px;height:452px;background:#a9c1dc"></div>
</body></html>
